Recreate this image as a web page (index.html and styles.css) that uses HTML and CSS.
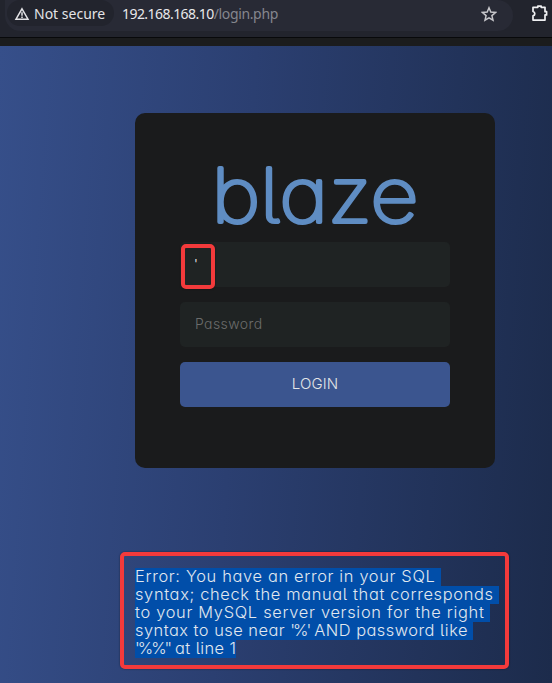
FILE: index.html
```
<!DOCTYPE html>
<html lang="en">
<head>
<meta charset="utf-8">
<title>blaze</title>
<link rel="stylesheet" href="styles.css">
</head>
<body>
<header class="toolbar">
  <div class="address">
    <div class="security">
      <svg width="16" height="14" viewBox="0 0 16 14" fill="none" stroke="#e3e3e6" stroke-width="1.5"><path d="M8 1.8 14 12.2H2Z"/><path d="M8 5.2v3.5M8 9.6v1.5"/></svg>
      <span>Not secure</span>
    </div>
    <div class="url"><b>192.168.168.10</b><span>/login.php</span></div>
    <svg class="star" width="16" height="16" viewBox="0 0 16 16" fill="none" stroke="#c7c7cb" stroke-width="1.5"><path d="m8 1.8 1.8 4.3 4.7.4-3.6 3.1 1.1 4.6L8 11.8l-4 2.4 1.1-4.6-3.6-3.1 4.7-.4Z"/></svg>
  </div>
  <svg class="puzzle" width="18" height="18" viewBox="0 0 18 18" fill="none" stroke="#f0f0f2" stroke-width="1.7" stroke-linejoin="round"><path d="M2 3.3h4.8V2.2h3.4v1.1H14v4.4h1.6v3.2H14v5.2H2v-4.2c2.4-.7 2.4-3.7 0-4.4Z"/></svg>
</header>
<main class="page">
  <form class="card">
    <svg class="brand" width="270" height="84" viewBox="0 0 270 84"><text x="31.5" y="63.5" textLength="207" lengthAdjust="spacingAndGlyphs">blaze</text></svg>
    <div class="field"><span class="typed">'</span><i class="mark mark-input"></i></div>
    <div class="field">Password</div>
    <div class="button">LOGIN</div>
  </form>
  <div class="error">
    <span class="l1">Error: You have an error in your SQL </span>
    <span class="l2">syntax; check the manual that corresponds </span>
    <span class="l3">to your MySQL server version for the right </span>
    <span class="l4">syntax to use near <b>'%'</b> AND password like </span>
    <span class="l5"><b>'%%''</b> at line 1</span>
    <i class="mark mark-error"></i>
  </div>
</main>
</body>
</html>
```
FILE: styles.css
```
* { box-sizing: border-box; }
body { margin: 0; width: 552px; height: 683px; overflow: hidden; font-family: Inter, sans-serif; font-feature-settings: "cv11", "cv05"; }
.toolbar { height: 38px; background: #22242d; border-bottom: 1px solid #08090b; display: flex; align-items: flex-start; font-family: "Noto Sans", sans-serif; font-size: 14px; font-feature-settings: normal; }
.address { width: 508px; height: 31px; margin-left: 5px; background: #282a35; border-radius: 0 16px 16px 16px; display: flex; }
.security { width: 107px; height: 26px; margin-left: 2px; background: #22242d; border-radius: 13px; display: flex; color: #e3e3e6; padding-left: 7px; line-height: 28px; }
.security svg { margin: 7px 4px 0 0; }
.url { margin-left: 8px; line-height: 28px; color: #e8e8eb; width: 353px; }
.url b { font-weight: 400; letter-spacing: -0.55px; }
.url span { color: #85868e; letter-spacing: -0.35px; }
.star { margin-top: 6px; margin-left: 6px; flex: none; }
.puzzle { margin: 4px 0 0 18px; flex: none; }
.page { height: 645px; border-top: 8px solid #1b1c1d; background: linear-gradient(94deg, #364f8a 0%, #2b3f71 43%, #1c2b4b 100%); padding: 67px 0 0 135px; }
.card { width: 360px; height: 355px; border-radius: 10px; background: #1a1b1c; padding: 45px; }
.brand { display: block; overflow: visible; }
.brand text { font-size: 74.5px; font-weight: 100; fill: #5f8dc3; stroke: #5f8dc3; stroke-width: 4px; stroke-linejoin: round; }
.field, .button { position: relative; height: 45px; border-radius: 5px; margin-bottom: 15px; padding: 0 15px; line-height: 44px; font-size: 14px; letter-spacing: 0.4px; background: #1f2323; color: #6b6c6b; font-weight: 300; }
.typed { color: #fff; font-size: 13px; margin-left: -1px; }
.button { background: #3b558f; color: #e4e6e8; text-align: center; font-size: 15px; letter-spacing: 0.1px; }
.mark { position: absolute; border: 4px solid #f33a3b; border-radius: 5px; box-shadow: 0 0 2px #0008; }
.mark-input { left: 1px; top: 2px; width: 34px; height: 45px; }
.error { position: relative; margin-top: 100px; width: 364px; font-size: 16.4px; line-height: 16px; font-weight: 300; color: #e1e8ef; }
.error span { display: block; width: max-content; height: 18px; white-space: pre; background: #014ea9; }
.error b { font-weight: 300; letter-spacing: -2px; }
.l1, .l2 { letter-spacing: 0.66px; }
.l3 { letter-spacing: 0.7px; }
.l4 { letter-spacing: 0.49px; }
.l5 { letter-spacing: 0.4px; }
.mark-error { left: -15px; top: -16px; width: 389px; height: 117px; }
```
